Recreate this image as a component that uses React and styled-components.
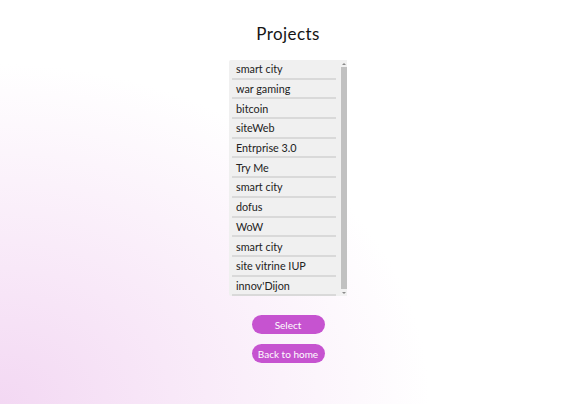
import React from 'react'
import styled, { createGlobalStyle } from 'styled-components'

const GlobalStyle = createGlobalStyle`
  html, body {
    margin: 0;
    padding: 0;
    background: #fff;
  }
`

const Page = styled.div`
  height: 404px;
  padding-left: 4px;
  display: flex;
  flex-direction: column;
  align-items: center;
  background: radial-gradient(ellipse 430px 340px at 0% 100%, #f3d8f3 0%, #f8e8f8 40%, #ffffff 100%);
`

const Title = styled.h1`
  margin: 24px 0 16px;
  font-family: Lato, "Noto Sans", sans-serif;
  font-weight: 400;
  font-size: 17px;
  line-height: 20px;
  color: #151515;
  letter-spacing: 0.4px;
`

const ListBox = styled.div`
  width: 118px;
  height: 236px;
  box-sizing: border-box;
  padding: 0 0 0 3px;
  display: flex;
  gap: 4px;
  background: #f0f0f0;
  border-radius: 2px;
`

const List = styled.ul`
  flex: 1;
  list-style: none;
  margin: 0;
  padding: 0;
  overflow: hidden;
`

const Item = styled.li`
  height: 17.7px;
  padding: 0 4px;
  display: flex;
  align-items: center;
  border-bottom: 2px solid #d9d9d9;
  font-family: Lato, "Open Sans", sans-serif;
  font-size: 10.8px;
  color: #222;
  cursor: pointer;
`

const Scrollbar = styled.div`
  width: 7px;
  display: flex;
  flex-direction: column;
  align-items: center;
  background: #f1f1f1;
`

const Arrow = styled.div`
  height: 7px;
  width: 100%;
  display: flex;
  align-items: center;
  justify-content: center;

  &::after {
    content: '';
    border-left: 2px solid transparent;
    border-right: 2px solid transparent;
    ${({ $down }) =>
      $down ? 'border-top: 2px solid #8a8a8a;' : 'border-bottom: 2px solid #8a8a8a;'}
  }
`

const Thumb = styled.div`
  flex: 1;
  width: 6px;
  background: #c1c1c1;
`

const Actions = styled.div`
  margin-top: 19px;
  display: flex;
  flex-direction: column;
  gap: 10px;
`

const Button = styled.button`
  width: 73px;
  height: 19px;
  padding: 0;
  border: 0;
  border-radius: 10px;
  background: #c653d0;
  color: #fff;
  font-family: Lato, "Noto Sans", sans-serif;
  font-size: 10px;
  cursor: pointer;
`

const projects = [
  'smart city',
  'war gaming',
  'bitcoin',
  'siteWeb',
  'Entrprise 3.0',
  'Try Me',
  'smart city',
  'dofus',
  'WoW',
  'smart city',
  'site vitrine IUP',
  "innov'Dijon",
]

export default function App() {
  return (
    <>
      <GlobalStyle />
      <Page>
        <Title>Projects</Title>
        <ListBox>
          <List>
            {projects.map((p, i) => (
              <Item key={i}>{p}</Item>
            ))}
          </List>
          <Scrollbar>
            <Arrow />
            <Thumb />
            <Arrow $down />
          </Scrollbar>
        </ListBox>
        <Actions>
          <Button>Select</Button>
          <Button>Back to home</Button>
        </Actions>
      </Page>
    </>
  )
}
